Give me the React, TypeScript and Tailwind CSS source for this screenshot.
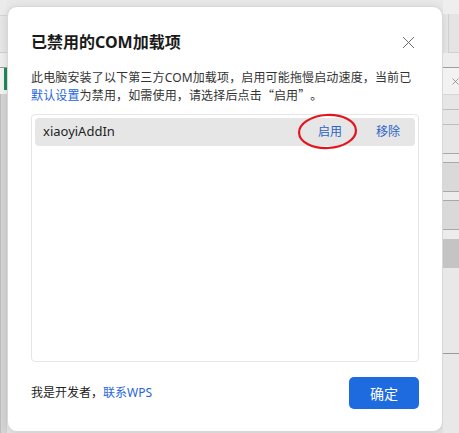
import { X } from "lucide-react";

const font = "font-['Noto_Sans','Noto_Sans_CJK_SC',sans-serif]";
const cjk = "font-['Noto_Sans_CJK_SC',sans-serif]";

function LeftStrip() {
  return (
    <div className="w-[7px] h-[433px] flex flex-col shrink-0">
      <div className="h-[16px] bg-[#ebebeb] border-b border-[#d4d4d4]" />
      <div className="h-[37px] bg-[#e6e6e6] border-b border-[#cfcfcf]" />
      <div className="h-[15px] bg-[#eeeeee] border-b border-[#9a9a9a]" />
      <div className="h-[26px] bg-[#f3f3f3] flex flex-col">
        <div className="ml-[4px] w-[3px] h-[22px] bg-[#1f8a5c]" />
      </div>
      <div className="flex-1 bg-[#d5d5d5] border-l border-[#bdbdbd]" />
    </div>
  );
}

function RightStrip() {
  return (
    <div className="flex-1 h-[433px] flex flex-col">
      <div className="h-[14px] bg-[#eeeeee]" />
      <div className="h-[39px] bg-[#e4e4e4] border-b border-[#d0d0d0] border-l border-l-[#cfcfcf] ml-[5px]" />
      <div className="h-[15px] bg-[#ededed] border-b border-[#9e9e9e]" />
      <div className="h-[27px] bg-[#f2f2f2] border-b border-[#d6d6d6] flex items-center pl-[7px]">
        <X className="w-[11px] h-[11px] text-[#777]" strokeWidth={1.5} />
      </div>
      <div className="h-[15px] bg-[#e6e6e6] border-b border-[#bdbdbd]" />
      <div className="h-[15px] bg-[#e6e6e6] border-b border-[#bdbdbd]" />
      <div className="h-[29px] bg-[#e6e6e6] border-b border-[#a9a9a9]" />
      <div className="h-[9px] bg-[#ececec] border-b border-[#a9a9a9]" />
      <div className="h-[29px] bg-[#d9d9d9] border-b border-[#a9a9a9]" />
      <div className="h-[9px] bg-[#ececec] border-b border-[#a9a9a9]" />
      <div className="h-[29px] bg-[#d9d9d9] border-b border-[#a9a9a9]" />
      <div className="h-[9px] bg-[#ececec]" />
      <div className="h-[29px] bg-[#c4c4c4]" />
      <div className="h-[86px] bg-[#e8e8e8] border-b border-[#9a9a9a]" />
      <div className="flex-1 bg-[#e8e8e8]" />
    </div>
  );
}

export default function App() {
  return (
    <div lang="zh-CN" className={`w-[459px] h-[433px] flex overflow-hidden bg-[#e8e8e8] ${font}`}>
      <LeftStrip />
      <div className="w-[436px] h-[426px] mt-[6px] shrink-0 bg-white rounded-[10px] border border-[#d8d8d8] shadow-[0_2px_8px_rgba(0,0,0,0.12)] flex flex-col px-[23px] pt-[23px] pb-[22px]">
        <div className="flex items-center justify-between h-[24px]">
          <h2 className="text-[16px] leading-[24px] font-bold text-[#1a1a1a]">已禁用的COM加载项</h2>
          <button className="w-[22px] h-[22px] flex items-center justify-center text-[#666]">
            <X className="w-[21px] h-[21px]" strokeWidth={1.1} />
          </button>
        </div>

        <p className="mt-[15px] text-[12px] leading-[17px] text-[#333] whitespace-nowrap tracking-[0.15px]">
          此电脑安装了以下第三方COM加载项，启用可能拖慢启动速度，当前已
          <br />
          <span className="text-[#1f66e0]">默认设置</span>为禁用，如需使用，请选择后点击
          <span className={`${cjk} inline-block w-[12px] text-right`}>“</span>启用
          <span className={`${cjk} inline-block w-[12px]`}>”</span>。
        </p>

        <div className="mt-[10px] flex-1 border border-[#e6e6e6] rounded-[4px] p-[3px]">
          <div className="relative h-[28px] rounded-[4px] bg-[#e6e6e6] flex items-center pl-[8px] pr-[15px]">
            <span className="flex-1 text-[13px] text-[#1f1f1f]">xiaoyiAddIn</span>
            <span className="text-[12px] text-[#2a63c9]">启用</span>
            <span className="ml-[34px] text-[12px] text-[#2a63c9]">移除</span>
            <svg
              className="absolute left-[262px] top-[-5px]"
              width="61"
              height="37"
              viewBox="0 0 61 37"
            >
              <ellipse
                cx="30.5"
                cy="18.5"
                rx="28.5"
                ry="16.5"
                fill="none"
                stroke="#e3161f"
                strokeWidth="2.2"
                transform="rotate(-3 30.5 18.5)"
              />
            </svg>
          </div>
        </div>

        <div className="mt-[15px] h-[32px] flex items-center justify-between">
          <span className="text-[12px] text-[#222]">
            我是开发者，<span className="text-[#1f66e0]">联系WPS</span>
          </span>
          <button className="w-[70px] h-[32px] rounded-[5px] bg-[#1e6be0] text-white text-[14px]">
            确定
          </button>
        </div>
      </div>
      <RightStrip />
    </div>
  );
}
